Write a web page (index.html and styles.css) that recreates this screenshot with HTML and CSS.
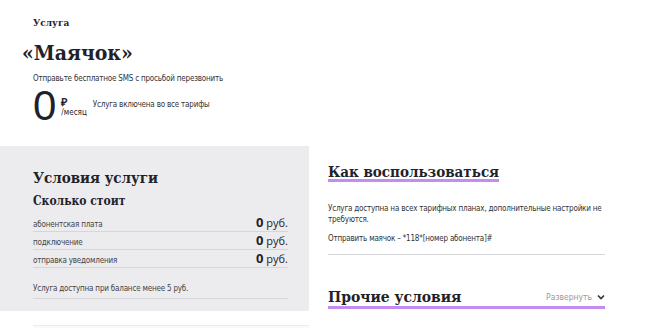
FILE: index.html
```html
<!DOCTYPE html>
<html lang="ru">
<head>
    <meta charset="UTF-8">
    <meta name="viewport" content="width=device-width, initial-scale=1.0">
    <title>Маячок</title>
    <link rel="stylesheet" href="styles.css">
</head>
<body>
    <header class="service-header">
        <div class="service-label">Услуга</div>
        <h1 class="service-title">«Маячок»</h1>
        <div class="service-desc">Отправьте бесплатное SMS с просьбой перезвонить</div>
        <div class="price">
            <span class="price-value">0</span>
            <span class="price-unit">
                <span class="price-currency">₽</span>
                <span class="price-period">/месяц</span>
            </span>
            <span class="price-note">Услуга включена во все тарифы</span>
        </div>
    </header>

    <div class="content">
        <div class="left-col">
            <section class="conditions">
                <h2 class="conditions-title">Условия услуги</h2>
                <h3 class="conditions-sub">Сколько стоит</h3>
                <div class="cost-row">
                    <span>абонентская плата</span>
                    <span class="cost"><b>0</b> руб.</span>
                </div>
                <div class="cost-row">
                    <span>подключение</span>
                    <span class="cost"><b>0</b> руб.</span>
                </div>
                <div class="cost-row">
                    <span>отправка уведомления</span>
                    <span class="cost"><b>0</b> руб.</span>
                </div>
                <div class="cost-note">Услуга доступна при балансе менее 5 руб.</div>
            </section>
            <div class="next-card"></div>
        </div>

        <div class="right-col">
            <section class="usage">
                <h2 class="accent-title"><span>Как воспользоваться</span></h2>
                <p>Услуга доступна на всех тарифных планах, дополнительные настройки не требуются.</p>
                <p>Отправить маячок – *118*[номер абонента]#</p>
            </section>
            <section class="other">
                <h2 class="other-title">Прочие условия</h2>
                <span class="expand">Развернуть
                    <svg width="8" height="6" viewBox="0 0 8 6"><path d="M1 1.5 L4 4.5 L7 1.5" fill="none" stroke="#333" stroke-width="1.6"/></svg>
                </span>
            </section>
        </div>
    </div>
</body>
</html>
```

FILE: styles.css
```css
body {
    margin: 0;
    font-family: "Liberation Sans Narrow", "DejaVu Sans Condensed", "Liberation Sans", sans-serif;
    color: #1f2229;
    background-color: white;
}

.service-header {
    padding: 16px 0 0 33px;
    height: 130px;
    box-sizing: border-box;
}

.service-label {
    font-family: "DejaVu Serif Condensed", "DejaVu Serif", serif;
    font-weight: 700;
    font-size: 10px;
    line-height: 14px;
}

.service-title {
    font-family: "DejaVu Serif Condensed", "DejaVu Serif", serif;
    font-weight: 700;
    font-size: 21px;
    line-height: 26px;
    margin: 10px 0 0 -11px;
}

.service-desc {
    font-size: 8px;
    letter-spacing: -0.2px;
    margin-top: 8px;
    color: #333;
}

.price {
    display: flex;
    align-items: center;
    margin-top: 4px;
}

.price-value {
    font-family: "Liberation Sans Narrow", "Liberation Sans", sans-serif;
    font-size: 42px;
    line-height: 38px;
}

.price-unit {
    display: flex;
    flex-direction: column;
    margin-left: 5px;
    font-size: 8px;
}

.price-currency {
    font-family: "Liberation Sans", sans-serif;
    font-weight: 700;
    font-size: 11px;
    line-height: 12px;
}

.price-note {
    font-size: 8px;
    letter-spacing: -0.2px;
    margin-left: 6px;
    margin-top: -4px;
    color: #333;
}

.content {
    display: grid;
    grid-template-columns: 309px 277px;
    column-gap: 19px;
    margin-top: 16px;
}

.conditions {
    background-color: #ececef;
    padding: 23px 21px 12px 33px;
}

.conditions-title {
    font-family: "DejaVu Serif Condensed", "DejaVu Serif", serif;
    font-weight: 700;
    font-size: 15px;
    line-height: 18px;
    margin: 0;
}

.conditions-sub {
    font-family: "DejaVu Serif Condensed", "DejaVu Serif", serif;
    font-weight: 700;
    font-size: 12px;
    line-height: 16px;
    margin: 6px 0 5px;
}

.cost-row {
    display: flex;
    justify-content: space-between;
    align-items: baseline;
    font-size: 8px;
    letter-spacing: -0.2px;
    color: #444;
    height: 17px;
    line-height: 17px;
    border-bottom: 1px solid #d6d6da;
}

.cost {
    font-family: "Open Sans", sans-serif;
    font-size: 11px;
    letter-spacing: 0;
    color: #1f2229;
}

.cost b {
    font-size: 13px;
}

.cost-note {
    font-size: 8px;
    letter-spacing: -0.2px;
    color: #444;
    margin-top: 16px;
    padding-bottom: 5px;
    border-bottom: 1px solid #d6d6da;
}

.next-card {
    margin: 14px 0 0 33px;
    height: 10px;
    border-top: 1px solid #ececef;
    background-color: #fafafb;
}

.usage {
    padding-top: 16px;
    border-bottom: 1px solid #d6d6da;
    padding-bottom: 10px;
}

.accent-title {
    font-family: "DejaVu Serif Condensed", "DejaVu Serif", serif;
    font-weight: 700;
    font-size: 15px;
    line-height: 20px;
    margin: 0 0 21px;
}

.accent-title span {
    padding-bottom: 1px;
    background: linear-gradient(#c58cf0, #c58cf0) left bottom / 100% 3px no-repeat;
}

.usage p {
    font-size: 8px;
    letter-spacing: -0.2px;
    line-height: 11px;
    margin: 0 0 8px;
    color: #333;
}

.usage p:last-child {
    margin-bottom: 0;
}

.other {
    display: flex;
    justify-content: space-between;
    align-items: flex-end;
    margin-top: 32px;
    border-bottom: 3px solid #c58cf0;
}

.other-title {
    font-family: "DejaVu Serif Condensed", "DejaVu Serif", serif;
    font-weight: 700;
    font-size: 15.5px;
    line-height: 19px;
    margin: 0;
}

.expand {
    display: flex;
    align-items: center;
    gap: 5px;
    font-size: 8.5px;
    color: #999;
    padding-bottom: 4px;
}
```
